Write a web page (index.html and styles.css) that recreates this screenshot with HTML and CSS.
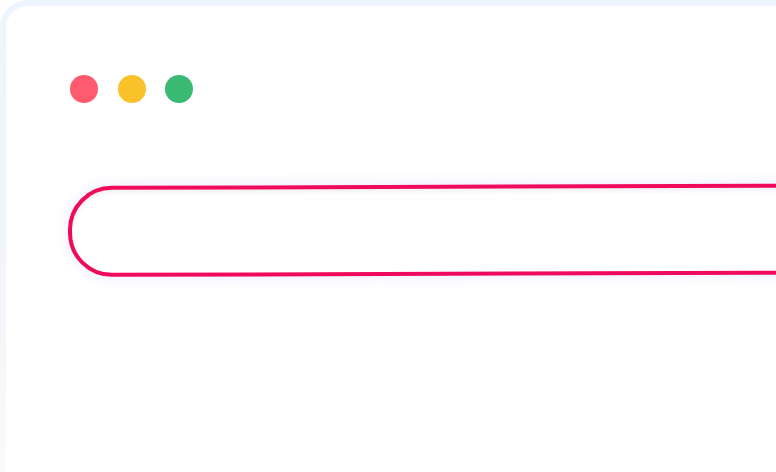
FILE: index.html
```html
<!DOCTYPE html>
<html>
<head>
<meta charset="utf-8">
<link rel="stylesheet" href="styles.css">
</head>
<body>
<div class="window">
  <div class="dots">
    <span class="dot red"></span>
    <span class="dot yellow"></span>
    <span class="dot green"></span>
  </div>
  <div class="search"></div>
</div>
</body>
</html>
```
FILE: styles.css
```css
html, body {
  margin: 0;
  padding: 0;
  background: #ffffff;
  overflow: hidden;
  font-family: "Liberation Sans", Arial, sans-serif;
}
.window {
  width: 900px;
  height: 520px;
  box-sizing: border-box;
  border: 6px solid transparent;
  border-radius: 28px;
  background:
    linear-gradient(#ffffff, #ffffff) padding-box,
    linear-gradient(180deg, #ecf5fe 0%, #f3f6fa 60%, #fbfbfb 100%) border-box;
  padding: 69px 0 0 64px;
}
.dots {
  display: flex;
  gap: 19.5px;
}
.dot {
  width: 28px;
  height: 28px;
  border-radius: 50%;
  display: block;
}
.red { background: #ff5a6e; }
.yellow { background: #f9c22a; }
.green { background: #3bba74; }
.search {
  margin-top: 83px;
  margin-left: -2px;
  width: 900px;
  height: 91px;
  box-sizing: border-box;
  border: 4px solid #ef0a5b;
  border-radius: 44px;
  background: #ffffff;
  box-shadow: 0 0 14px rgba(110, 120, 255, 0.16), inset 0 3px 4px rgba(0, 0, 0, 0.06);
  transform: rotate(-0.18deg);
  transform-origin: left center;
}
```
